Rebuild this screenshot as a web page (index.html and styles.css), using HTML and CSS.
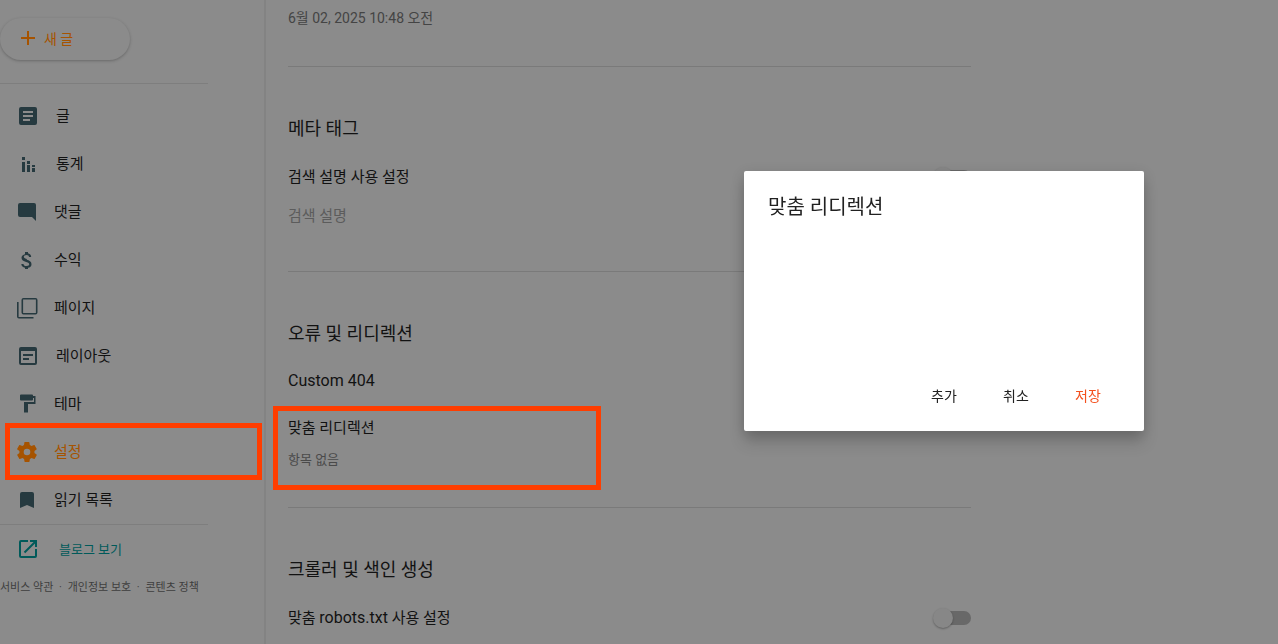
FILE: index.html
```html
<!DOCTYPE html>
<html lang="ko">

<head>

  <meta charset="UTF-8">
  <meta name="viewport" content="width=device-width, initial-scale=1">

  <title>설정</title>

  <link rel="stylesheet" href="styles.css">

</head>

<body>

  <div class="app">

    <aside class="sidebar">

      <button type="button" class="new-post">
        <svg width="24" height="24" viewBox="0 0 24 24"><path d="M11 5h2v6h6v2h-6v6h-2v-6H5v-2h6z"/></svg>
        새 글
      </button>

      <nav class="menu">
        <a href="#posts" class="menu-item">
          <svg class="icon wide" viewBox="0 0 24 24"><path d="M19 3H5a2 2 0 0 0-2 2v14a2 2 0 0 0 2 2h14a2 2 0 0 0 2-2V5a2 2 0 0 0-2-2zm-5 14H7v-2h7v2zm3-4H7v-2h10v2zm0-4H7V7h10v2z"/></svg>
          글
        </a>
        <a href="#stats" class="menu-item">
          <svg class="icon wide" viewBox="0 0 24 24"><path d="M6 5h3v3H6zM6 10h3v10H6zM11 9h3v3h-3zM11 13h3v7h-3zM16 13h3v2h-3zM16 16h3v4h-3z"/></svg>
          통계
        </a>
        <a href="#comments" class="menu-item">
          <svg class="icon" viewBox="0 0 24 24"><path d="M21 5a2 2 0 0 0-2-2H5a2 2 0 0 0-2 2v10a2 2 0 0 0 2 2h12l4 4z"/></svg>
          댓글
        </a>
        <a href="#earnings" class="menu-item">
          <svg class="icon" viewBox="0 0 24 24"><path d="M11.8 10.9c-2.3-.6-3-1.2-3-2.1 0-1.1 1-1.9 2.7-1.9 1.8 0 2.4.9 2.5 2.1h2.2c-.1-1.7-1.1-3.3-3.2-3.8V4h-3v2.2c-1.900.4-3.500 1.700-3.500 3.600 0 2.300 1.900 3.500 4.700 4.100 2.500.6 3 1.500 3 2.400 0 .7-.5 1.800-2.700 1.800-2.100 0-2.900-.9-3-2.100H6.300c.1 2.200 1.700 3.400 3.700 3.800V21h3v-1.200c2-.4 3.500-1.500 3.500-3.600 0-2.800-2.400-3.800-4.700-4.400z"/></svg>
          수익
        </a>
        <a href="#pages" class="menu-item">
          <svg class="icon" viewBox="0 0 24 24"><path d="M3.600 6H2v14.500a2 2 0 0 0 2 2h14.500V21H3.600zM20.500 2h-12a2 2 0 0 0-2 2v12.500a2 2 0 0 0 2 2h12a2 2 0 0 0 2-2V4a2 2 0 0 0-2-2zm.4 14.900H8.100V3.600h12.800z"/></svg>
          페이지
        </a>
        <a href="#layout" class="menu-item">
          <svg class="icon wide" viewBox="0 0 24 24"><path d="M19 3H5a2 2 0 0 0-2 2v14a2 2 0 0 0 2 2h14a2 2 0 0 0 2-2V5a2 2 0 0 0-2-2zm0 16H5V7h14v12zM7 10h10v2H7zM7 14h6v2H7z"/></svg>
          레이아웃
        </a>
        <a href="#theme" class="menu-item">
          <svg class="icon" viewBox="0 0 24 24"><path d="M18 4V3.500a1 1 0 0 0-1-1H6a1 1 0 0 0-1 1v4a1 1 0 0 0 1 1h11a1 1 0 0 0 1-1V6h1v4H9v10.500h4V12h7.500V4z"/></svg>
          테마
        </a>
        <a href="#settings" class="menu-item active marked mark-menu" aria-current="page">
          <svg class="icon" viewBox="0 0 24 24"><path d="M19.400 13c0-.3.100-.6.100-1s0-.7-.1-1l2.100-1.600c.2-.2.200-.4.100-.6l-2-3.500c-.1-.2-.4-.3-.6-.2l-2.500 1c-.5-.4-1.100-.7-1.700-1l-.4-2.600c0-.2-.2-.5-.5-.5h-4c-.3 0-.5.2-.5.4l-.4 2.700c-.6.200-1.200.600-1.700 1l-2.500-1c-.2-.1-.5 0-.6.200l-2 3.500c-.1.200-.1.500.1.600L4.500 11c0 .3-.1.700-.1 1s0 .7.1 1l-2.100 1.600c-.2.200-.2.400-.1.600l2 3.500c.1.200.4.300.6.200l2.500-1c.5.400 1.100.7 1.700 1l.4 2.600c0 .3.200.5.500.5h4c.3 0 .5-.2.500-.5l.4-2.600c.6-.3 1.200-.6 1.700-1l2.500 1c.2.100.5 0 .6-.2l2-3.500c.1-.2.100-.5-.1-.6zM12 15.300a3.300 3.300 0 1 1 0-6.600 3.300 3.300 0 0 1 0 6.600z"/></svg>
          설정
        </a>
        <a href="#reading" class="menu-item">
          <svg class="icon" viewBox="0 0 24 24"><path d="M17 4H7a2 2 0 0 0-2 2v14l7-3 7 3V6a2 2 0 0 0-2-2z"/></svg>
          읽기 목록
        </a>
      </nav>

      <a href="#blog" class="view-blog">
        <svg class="icon wide" viewBox="0 0 24 24"><path d="M19 19H5V5h7V3H5a2 2 0 0 0-2 2v14a2 2 0 0 0 2 2h14a2 2 0 0 0 2-2v-7h-2zM14 3v2h3.600l-9.800 9.800 1.400 1.400L19 6.400V10h2V3z"/></svg>
        블로그 보기
      </a>

      <footer class="legal">
        <a href="#terms">서비스 약관</a> · <a href="#privacy">개인정보 보호</a> · <a href="#content">콘텐츠 정책</a>
      </footer>

    </aside>

    <main class="content">

      <section class="section date-section">
        <p class="date">6월 02, 2025 10:48 오전</p>
      </section>

      <section class="section">
        <h2>메타 태그</h2>
        <div class="row">
          <label for="descToggle">검색 설명 사용 설정</label>
          <input type="checkbox" class="toggle" id="descToggle">
        </div>
        <p class="sub disabled">검색 설명</p>
      </section>

      <section class="section">
        <h2>오류 및 리디렉션</h2>
        <div class="row"><span class="latin">Custom 404</span></div>
        <div class="setting marked mark-setting">
          <p class="setting-name">맞춤 리디렉션</p>
          <p class="sub">항목 없음</p>
        </div>
      </section>

      <section class="section">
        <h2>크롤러 및 색인 생성</h2>
        <div class="row">
          <label for="robotsToggle">맞춤 <span class="latin">robots.txt</span> 사용 설정</label>
          <input type="checkbox" class="toggle" id="robotsToggle">
        </div>
      </section>

    </main>

  </div>

  <div class="dialog" role="dialog" aria-labelledby="dialogTitle">
    <h1 id="dialogTitle">맞춤 리디렉션</h1>
    <div class="dialog-buttons">
      <button type="button">추가</button>
      <button type="button">취소</button>
      <button type="button" class="save">저장</button>
    </div>
  </div>

</body>

</html>
```
FILE: styles.css
```css
*, *::before, *::after {
  box-sizing: border-box;
}

body {
  margin: 0;
  background: #8b8b8b;
  color: #121212;
  font-family: Roboto, "Noto Sans CJK KR", sans-serif;
  font-size: 15px;
}

h1, h2, p {
  margin: 0;
  font-weight: 400;
}

a {
  color: inherit;
  text-decoration: none;
}

button {
  border: 0;
  background: none;
  font: inherit;
  font-size: 14px;
  cursor: pointer;
}

svg {
  fill: currentColor;
  flex: none;
}

.app {
  display: flex;
  min-height: 100vh;
}

/* sidebar */
.sidebar {
  flex: 0 0 266px;
  padding-top: 18px;
  border-right: 2px solid #838383;
}

.new-post {
  display: flex;
  align-items: center;
  gap: 4px;
  width: 130px;
  height: 42px;
  margin-bottom: 23px;
  padding: 0 16px 2px;
  border-radius: 21px;
  color: #a65300;
  box-shadow: 0 1px 3px rgba(0, 0, 0, .25);
}

.menu::before {
  content: "";
  display: block;
  width: 208px;
  margin-bottom: 7px;
  border-top: 1px solid #7e7e7e;
}

.menu-item {
  display: flex;
  align-items: center;
  gap: 15px;
  height: 48px;
  padding: 0 0 2px 15px;
}

.icon {
  width: 24px;
  height: 24px;
  color: #263a40;
}

.menu-item .icon {
  margin-top: 4px;
}

.icon.wide {
  width: 26px;
}

.active,
.active .icon {
  color: #a65300;
}

.view-blog {
  display: flex;
  align-items: center;
  gap: 18px;
  width: 208px;
  height: 50px;
  margin-top: 1px;
  padding: 0 0 2px 15px;
  border-top: 1px solid #7e7e7e;
  color: #005a5a;
  font-size: 13px;
}

.view-blog .icon {
  color: inherit;
}

.legal {
  padding-top: 4px;
  color: #3e3e3e;
  font-size: 11px;
  line-height: 20px;
  white-space: nowrap;
}

.legal a {
  margin-right: 3px;
}

.legal a + a {
  margin-left: 3px;
}

/* settings */
.content {
  flex: 1;
  max-width: 705px;
  padding-left: 22px;
}

.section {
  padding-bottom: 30px;
  border-bottom: 1px solid #7a7a7a;
}

.section:last-child {
  padding-bottom: 0;
  border-bottom: 0;
}

.date-section {
  padding: 8px 0 38px;
}

.date {
  color: #444;
  font-size: 14px;
  line-height: 20px;
}

.section h2 {
  padding-top: 49px;
  margin-bottom: 9px;
  font-size: 18px;
  line-height: 26px;
}

.row {
  display: flex;
  align-items: center;
  justify-content: space-between;
  height: 48px;
}

.latin {
  font-size: 16px;
}

.setting {
  padding-top: 9px;
}

.setting-name {
  line-height: 30px;
}

.sub {
  color: #4a4a4a;
  font-size: 13px;
  line-height: 34px;
}

.sub.disabled {
  margin-bottom: 8px;
  color: #5c5c5c;
  font-size: 15px;
}

.toggle {
  position: relative;
  appearance: none;
  width: 36px;
  height: 14px;
  margin: 4px 0 0;
  border-radius: 7px;
  background: #686868;
}

.toggle::before {
  content: "";
  position: absolute;
  top: -3px;
  left: -2px;
  width: 20px;
  height: 20px;
  border-radius: 50%;
  background: #878787;
  box-shadow: 0 1px 2px rgba(0, 0, 0, .3);
}

/* red highlight frames */
.marked {
  position: relative;
}

.marked::after {
  content: "";
  position: absolute;
  border: 5px solid #ff3d00;
}

.mark-menu::after {
  inset: -4px 2px -5px 5px;
}

.mark-setting::after {
  top: 2px;
  left: -15px;
  width: 328px;
  height: 84px;
}

/* dialog */
.dialog {
  position: fixed;
  top: 171px;
  right: 134px;
  display: flex;
  flex-direction: column;
  justify-content: space-between;
  width: 400px;
  min-height: 260px;
  padding: 21px 24px 18px;
  border-radius: 2px;
  background: #fff;
  color: #212121;
  box-shadow: 0 12px 16px rgba(0, 0, 0, .14), 0 4px 14px rgba(0, 0, 0, .16);
}

.dialog h1 {
  font-size: 20px;
  line-height: 30px;
}

.dialog-buttons {
  display: flex;
  justify-content: flex-end;
  gap: 8px;
}

.dialog-buttons button {
  width: 64px;
  height: 36px;
  padding: 0;
  color: inherit;
}

.dialog-buttons .save {
  color: #f4511e;
}
```
